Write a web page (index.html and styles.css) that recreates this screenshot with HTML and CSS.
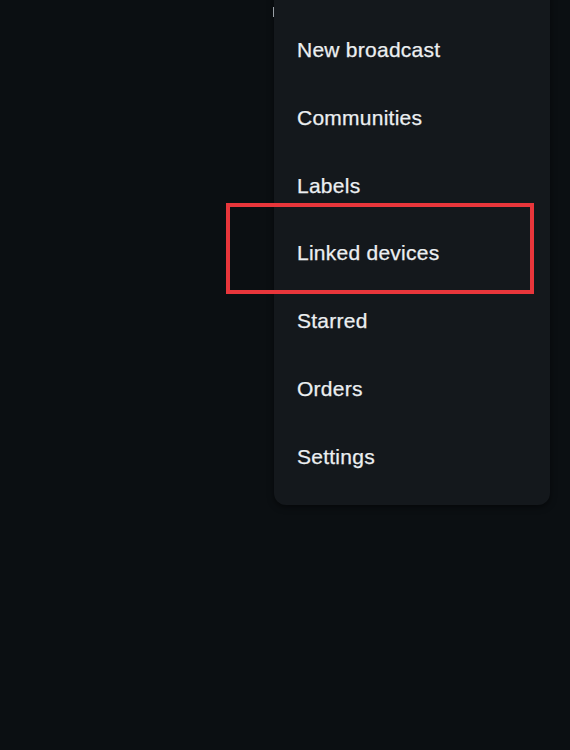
FILE: index.html
```html
<!DOCTYPE html>
<html>
<head>
<meta charset="utf-8">
<link rel="stylesheet" href="styles.css">
</head>
<body>
<div class="screen">
  <div class="menu">
    <div class="item">New broadcast</div>
    <div class="item">Communities</div>
    <div class="item">Labels</div>
    <div class="item">Linked devices</div>
    <div class="item">Starred</div>
    <div class="item">Orders</div>
    <div class="item">Settings</div>
  </div>
  <div class="highlight"></div>
  <div class="tick"></div>
</div>
</body>
</html>
```

FILE: styles.css
```css
html, body {
  margin: 0;
  padding: 0;
  background: #0b0f12;
}
.screen {
  position: relative;
  width: 570px;
  height: 750px;
  overflow: hidden;
  display: flex;
  justify-content: flex-end;
  align-items: flex-start;
  padding-right: 20px;
  box-sizing: border-box;
  font-family: "Liberation Sans", Arial, sans-serif;
}
.menu {
  width: 276px;
  margin-top: -25px;
  padding: 41px 0 14px;
  background: #14181c;
  border-radius: 12px;
  box-shadow: 0 2px 6px rgba(0,0,0,0.5);
  display: flex;
  flex-direction: column;
}
.item {
  height: 67.8px;
  line-height: 67.8px;
  padding-left: 23px;
  font-size: 21px;
  letter-spacing: 0.25px;
  -webkit-text-stroke: 0.25px #eceff1;
  color: #eceff1;
  white-space: nowrap;
}
.highlight {
  position: absolute;
  left: 226px;
  top: 203px;
  width: 308px;
  height: 91px;
  box-sizing: border-box;
  border: 4px solid #e8363b;
}
.tick {
  position: absolute;
  left: 273px;
  top: 7px;
  width: 1px;
  height: 10px;
  background: #9aa0a6;
}
```
